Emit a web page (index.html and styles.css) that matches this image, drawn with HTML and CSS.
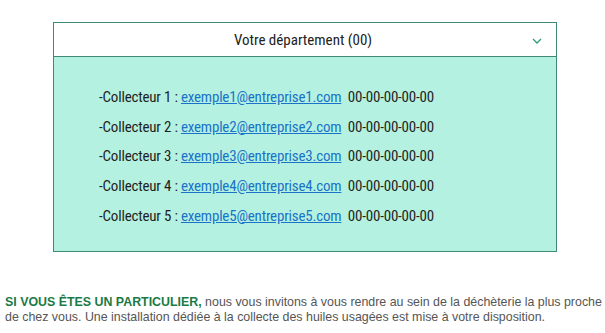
FILE: index.html
```html
<!DOCTYPE html>
<html lang="fr">
<head>
<meta charset="utf-8">
<link rel="stylesheet" href="styles.css">
</head>
<body>
<div class="page">
  <section class="accordion">
    <div class="acc-head">
      <span class="acc-title">Votre département (00)</span>
      <svg class="chev" width="10" height="6" viewBox="0 0 10 6"><path d="M1 1 L5 5 L9 1" fill="none" stroke="#2e9c7c" stroke-width="1.3"/></svg>
    </div>
    <div class="acc-body">
      <p class="row">-Collecteur 1 : <a href="#">exemple1@entreprise1.com</a>&nbsp; 00-00-00-00-00</p>
      <p class="row">-Collecteur 2 : <a href="#">exemple2@entreprise2.com</a>&nbsp; 00-00-00-00-00</p>
      <p class="row">-Collecteur 3 : <a href="#">exemple3@entreprise3.com</a>&nbsp; 00-00-00-00-00</p>
      <p class="row">-Collecteur 4 : <a href="#">exemple4@entreprise4.com</a>&nbsp; 00-00-00-00-00</p>
      <p class="row">-Collecteur 5 : <a href="#">exemple5@entreprise5.com</a>&nbsp; 00-00-00-00-00</p>
    </div>
  </section>
  <p class="info"><strong class="hl">SI VOUS ÊTES UN PARTICULIER,</strong> nous vous invitons à vous rendre au sein de la déchèterie la plus proche de chez vous. Une installation dédiée à la collecte des huiles usagées est mise à votre disposition.</p>
</div>
</body>
</html>
```
FILE: styles.css
```css
html, body { margin: 0; padding: 0; background: #fff; }
.page { padding-top: 22px; }
.accordion {
  margin: 0 48px 0 53px;
  width: 504px;
  box-sizing: border-box;
  border: 1px solid #3f8a74;
  font-family: Roboto, "Liberation Sans", sans-serif;
  font-stretch: 75%;
}
.acc-head {
  height: 33px;
  display: flex;
  align-items: center;
  justify-content: center;
  position: relative;
  padding-right: 4px;
  background: #fff;
  border-bottom: 1px solid #3f8a74;
  color: #222;
  font-size: 15px;
}
.chev { position: absolute; right: 14px; top: 15px; }
.acc-body {
  background: #b5f1e0;
  padding: 32px 0 24px 45px;
  height: 194px;
  box-sizing: border-box;
}
.row {
  margin: 0 0 12px;
  font-size: 15px;
  line-height: 17.7px;
  color: #1f1f1f;
  letter-spacing: -0.2px;
}
.row a { color: #1a73c9; text-decoration: underline; }
.info {
  margin: 43px 0 0 5px;
  font-family: "Liberation Sans", Arial, sans-serif;
  font-size: 12.4px;
  line-height: 15px;
  color: #555;
  width: 600px;
}
.hl { color: #197a45; font-weight: bold; }
```
